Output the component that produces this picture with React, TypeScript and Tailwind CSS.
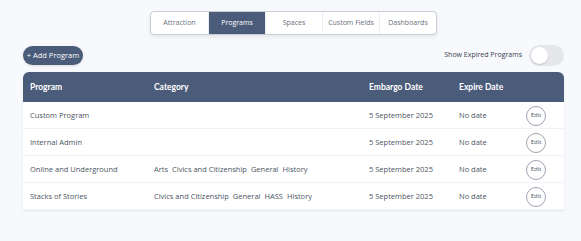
import React, { useState } from 'react';

const tabs = ['Attraction', 'Programs', 'Spaces', 'Custom Fields', 'Dashboards'];

const programs = [
  { name: 'Custom Program', categories: [], embargo: '5 September 2025', expire: 'No date' },
  { name: 'Internal Admin', categories: [], embargo: '5 September 2025', expire: 'No date' },
  {
    name: 'Online and Underground',
    categories: ['Arts', 'Civics and Citizenship', 'General', 'History'],
    embargo: '5 September 2025',
    expire: 'No date',
  },
  {
    name: 'Stacks of Stories',
    categories: ['Civics and Citizenship', 'General', 'HASS', 'History'],
    embargo: '5 September 2025',
    expire: 'No date',
  },
];

const cols = 'grid grid-cols-[124px_215px_90px_67px_20px] items-center pl-[7px]';

const App: React.FC = () => {
  const [showExpired, setShowExpired] = useState(false);

  return (
    <div className="min-h-screen bg-[#f8f9fc] pt-[11px] font-['Open_Sans',sans-serif]">
      <div className="mx-[23px] w-[541px]">
        {/* Tabs */}
        <div className="flex justify-center">
          <div className="flex h-[24px] overflow-hidden rounded-[4px] border border-[#c9cdd4] bg-white shadow-[0_2px_4px_rgba(0,0,0,0.08)]">
            {tabs.map((tab, i) => (
              <button
                key={tab}
                className={`w-[57px] text-[7px] ${i > 0 ? 'border-l border-[#eceef1]' : ''} ${
                  tab === 'Programs' ? 'bg-[#4b5b7a] text-white' : 'text-[#6b7280]'
                }`}
              >
                {tab}
              </button>
            ))}
          </div>
        </div>

        {/* Actions */}
        <div className="mt-[10px] flex items-center justify-between">
          <button className="h-[19px] w-[60px] rounded-full bg-[#4b5b7a] text-[7.5px] text-white shadow-sm">
            + Add Program
          </button>
          <div className="flex items-center gap-[7px]">
            <span className="text-[7px] text-[#374151]">Show Expired Programs</span>
            <button
              onClick={() => setShowExpired(!showExpired)}
              className="flex h-[21px] w-[35px] items-center rounded-full bg-[#e5e7eb] px-[2px]"
            >
              <span className="h-[17px] w-[17px] rounded-full bg-white shadow-[0_1px_2px_rgba(0,0,0,0.15)]" />
            </button>
          </div>
        </div>

        {/* Table */}
        <div className="mt-[6px] overflow-hidden rounded-t-[6px] bg-white shadow-[0_1px_3px_rgba(0,0,0,0.08)]">
          <div className={`${cols} h-[30px] bg-[#4b5b7a] pt-px font-['Lato',sans-serif] text-[8.5px] font-bold text-white`}>
            <div>Program</div>
            <div>Category</div>
            <div>Embargo Date</div>
            <div>Expire Date</div>
            <div />
          </div>
          {programs.map((p) => (
            <div key={p.name} className={`${cols} h-[27px] border-b border-[#f1f2f4] pt-px text-[7.5px] text-[#4b5563]`}>
              <div>{p.name}</div>
              <div className="flex gap-[4px]">
                {p.categories.map((c) => (
                  <span key={c}>{c}</span>
                ))}
              </div>
              <div>{p.embargo}</div>
              <div>{p.expire}</div>
              <button className="flex h-[20px] w-[20px] items-center justify-center rounded-full border border-[#9ca3af] text-[6px] text-[#4b5563]">
                Edit
              </button>
            </div>
          ))}
        </div>
      </div>
    </div>
  );
};

export default App;
